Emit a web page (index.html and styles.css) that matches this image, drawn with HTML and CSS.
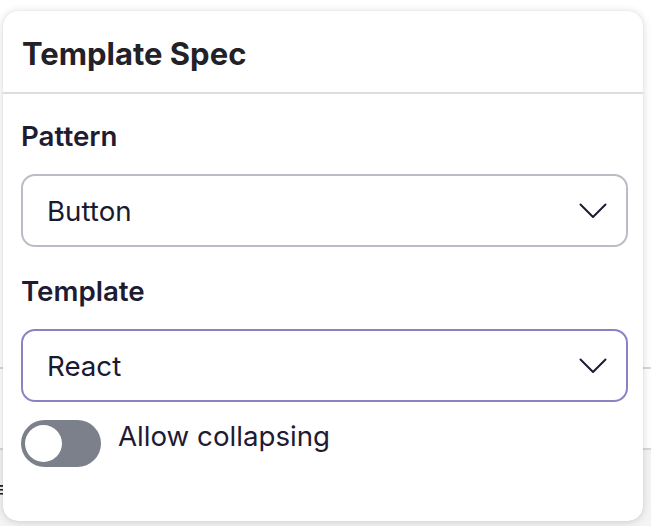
FILE: index.html
```html
<!DOCTYPE html>
<html>
<head>
<meta charset="utf-8">
<link rel="stylesheet" href="styles.css">
</head>
<body>
<div class="backdrop">
  <div class="bd-top"></div>
  <div class="bd-row"></div>
  <div class="bd-bottom"><span class="bd-glyph">≡</span></div>
</div>
<div class="card">
  <div class="card-header">
    <h2 class="title">Template Spec</h2>
  </div>
  <div class="card-body">
    <div class="field">
      <label class="label">Pattern</label>
      <div class="select">
        <span class="select-value">Button</span>
        <svg class="chevron" width="28" height="16" viewBox="0 0 28 16"><path d="M1.5 1.5 L14 14 L26.5 1.5" fill="none" stroke="#1e1b33" stroke-width="2" stroke-linecap="round" stroke-linejoin="round"/></svg>
      </div>
    </div>
    <div class="field">
      <label class="label">Template</label>
      <div class="select select-focus">
        <span class="select-value">React</span>
        <svg class="chevron" width="28" height="16" viewBox="0 0 28 16"><path d="M1.5 1.5 L14 14 L26.5 1.5" fill="none" stroke="#1e1b33" stroke-width="2" stroke-linecap="round" stroke-linejoin="round"/></svg>
      </div>
    </div>
    <div class="toggle-row">
      <span class="toggle"><span class="knob"></span></span>
      <span class="toggle-label">Allow collapsing</span>
    </div>
  </div>
</div>
</body>
</html>
```
FILE: styles.css
```css
* { box-sizing: border-box; }
html, body { margin: 0; padding: 0; }
body {
  width: 651px;
  height: 526px;
  overflow: hidden;
  background: #ffffff;
  font-family: Inter, "Noto Sans", sans-serif;
  position: relative;
}
.backdrop {
  display: flex;
  flex-direction: column;
  height: 526px;
}
.bd-top {
  height: 369px;
  border-bottom: 2px solid #d8d8dc;
}
.bd-row {
  height: 81px;
  border-bottom: 2px solid #d8d8dc;
}
.bd-bottom {
  flex: 1;
  background: #f4f4f5;
  position: relative;
}
.bd-glyph {
  position: absolute;
  left: 0;
  top: 28px;
  width: 3px;
  overflow: hidden;
  font-size: 22px;
  line-height: 22px;
  color: #222;
  text-indent: -8px;
  white-space: nowrap;
}
.card {
  position: absolute;
  left: 3px;
  top: 11px;
  width: 640px;
  height: 510px;
  background: #ffffff;
  border-radius: 15px;
  box-shadow: 0 1px 8px rgba(0, 0, 0, 0.16), 0 0 1px rgba(0,0,0,0.12);
  overflow: hidden;
}
.card-header {
  padding: 24px 19px 19px;
  border-bottom: 2px solid #dcdce1;
}
.title {
  margin: 0;
  font-size: 31px;
  line-height: 38px;
  font-weight: 700;
  color: #222127;
}
.card-body {
  padding: 26px 15px 0 18px;
  display: flex;
  flex-direction: column;
}
.field {
  display: flex;
  flex-direction: column;
  margin-bottom: 28px;
}
.field + .field { margin-bottom: 18px; }
.label {
  font-size: 27.7px;
  line-height: 32px;
  font-weight: 600;
  color: #1e1b33;
  margin-bottom: 22px;
  padding-top: 1px;
  margin-top: -1px;
}
.select {
  height: 73px;
  border: 2px solid #bdbcc6;
  border-radius: 14px;
  display: flex;
  align-items: center;
  justify-content: space-between;
  padding: 0 19px 0 24px;
}
.select-focus {
  border-color: #8f80c4;
}
.select-value {
  font-size: 27.7px;
  line-height: 32px;
  color: #1b1930;
}
.chevron { display: block; }
.toggle-row {
  display: flex;
  align-items: flex-start;
  gap: 17px;
}
.toggle {
  width: 80px;
  height: 47px;
  border-radius: 24px;
  background: #7b808b;
  padding: 4px;
  display: flex;
  align-items: center;
}
.knob {
  width: 37px;
  height: 37px;
  border-radius: 50%;
  background: #ffffff;
}
.toggle-label {
  font-size: 27.7px;
  line-height: 32px;
  color: #1e1b33;
}
```
